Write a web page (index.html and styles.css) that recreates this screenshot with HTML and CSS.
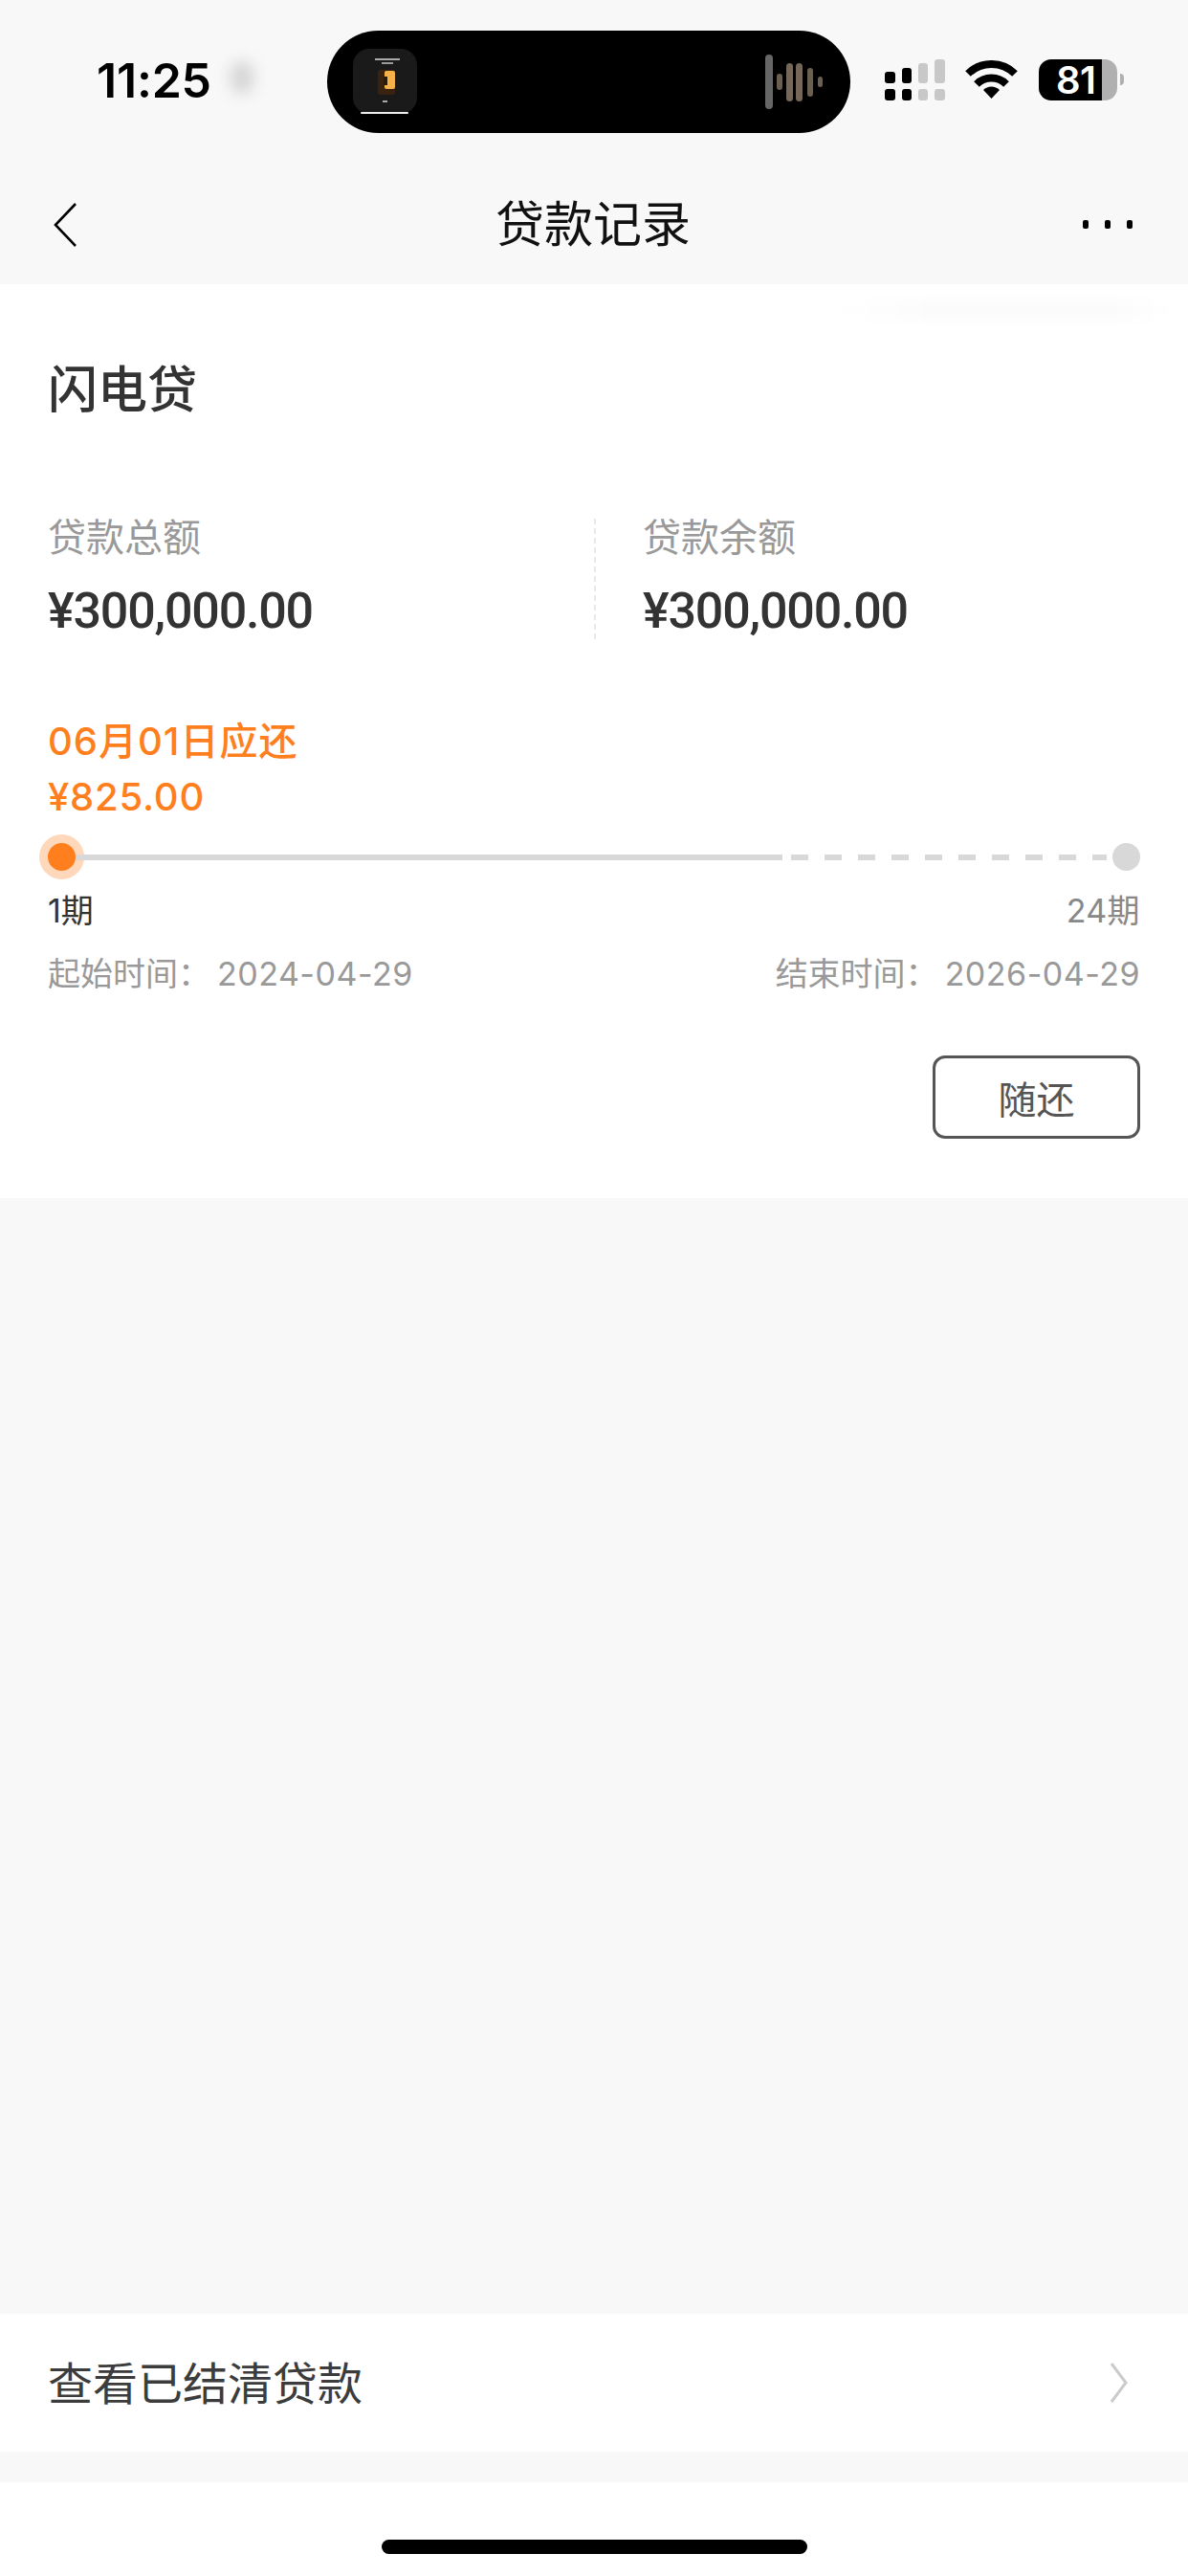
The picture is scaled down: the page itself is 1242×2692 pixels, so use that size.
FILE: index.html
```html
<!DOCTYPE html>
<html>
<head>
    <title>贷款记录</title>
    <link rel="stylesheet" href="styles.css">
</head>
<body>
    <div class="status">
        <div class="time">11:25</div>
        <div class="blur-dot"></div>
        <div class="island">
            <svg class="art" width="67" height="68" viewBox="0 0 67 68">
                <rect width="67" height="68" rx="17" fill="#1a1a1a"/>
                <rect x="23" y="10" width="26" height="2" fill="#aaa"/>
                <rect x="30" y="14" width="12" height="2" fill="#999"/>
                <rect x="26" y="22" width="18" height="26" rx="3" fill="#3a2210"/>
                <rect x="33" y="23" width="11" height="19" rx="2" fill="#f6b04a"/>
                <rect x="32" y="29" width="4" height="9" fill="#2a1a0a"/>
                <rect x="31" y="54" width="5" height="2" fill="#aaa"/>
                <rect x="8" y="66" width="50" height="2" rx="1" fill="#eee"/>
            </svg>
            <svg class="wave" width="60" height="57" viewBox="0 0 60 57">
                <rect x="0" y="0" width="8" height="57" rx="4" fill="#666"/>
                <rect x="12" y="20" width="6" height="17" rx="3" fill="#6b5f50"/>
                <rect x="22" y="9" width="7" height="40" rx="3.5" fill="#75675a"/>
                <rect x="32" y="9" width="7" height="40" rx="3.5" fill="#75675a"/>
                <rect x="44" y="14" width="6" height="30" rx="3" fill="#6b5f50"/>
                <rect x="55" y="23" width="5" height="11" rx="2.5" fill="#6b5f50"/>
            </svg>
        </div>
        <svg class="signal" width="63" height="43" viewBox="0 0 63 43">
            <rect x="0" y="13" width="11" height="12" rx="3"/>
            <rect x="0" y="31" width="11" height="12" rx="3"/>
            <rect x="18" y="9" width="10" height="16" rx="3"/>
            <rect x="18" y="31" width="10" height="12" rx="3"/>
            <rect x="35" y="4" width="10" height="21" rx="3" fill="#c8c8c8"/>
            <rect x="35" y="31" width="10" height="12" rx="3" fill="#c8c8c8"/>
            <rect x="52" y="0" width="11" height="25" rx="3" fill="#c8c8c8"/>
            <rect x="52" y="31" width="11" height="12" rx="3" fill="#c8c8c8"/>
        </svg>
        <svg class="wifi" width="55" height="40" viewBox="0 0 55 40">
            <path d="M3 14A35 35 0 0 1 52 14" fill="none" stroke="#000" stroke-width="8"/>
            <path d="M12 25A22 22 0 0 1 43 25" fill="none" stroke="#000" stroke-width="8"/>
            <path d="M27.5 40L19 31A12 12 0 0 1 36 31Z"/>
        </svg>
        <div class="battery">81</div>
        <div class="battery-nub"></div>
    </div>

    <div class="nav">
        <svg class="back" width="24" height="46" viewBox="0 0 24 46">
            <path d="M23 1L2 23L23 45" fill="none" stroke="#000" stroke-width="2.6"/>
        </svg>
        <div class="nav-title">贷款记录</div>
        <div class="more"><i></i><i></i><i></i></div>
    </div>

    <div class="card">
        <div class="card-shade"></div>
        <div class="product">闪电贷</div>
        <div class="stats">
            <div class="stat">
                <div class="stat-label">贷款总额</div>
                <div class="stat-value">¥300,000.00</div>
            </div>
            <div class="stat stat-right">
                <div class="stat-label">贷款余额</div>
                <div class="stat-value">¥300,000.00</div>
            </div>
        </div>
        <div class="due-date">06月01日应还</div>
        <div class="due-amount">¥825.00</div>
        <div class="track">
            <div class="dot dot-on"></div>
            <div class="line"></div>
            <div class="line-dashed"></div>
            <div class="dot"></div>
        </div>
        <div class="periods">
            <span class="period-now">1期</span>
            <span class="period-end">24期</span>
        </div>
        <div class="dates">
            <span><span class="date-label">起始时间：</span><span class="date">2024-04-29</span></span>
            <span><span class="date-label">结束时间：</span><span class="date">2026-04-29</span></span>
        </div>
        <div class="actions">
            <button class="repay">随还</button>
        </div>
    </div>

    <div class="main"></div>

    <div class="settled">
        <span class="settled-text">查看已结清贷款</span>
        <svg width="18" height="42" viewBox="0 0 18 42">
            <path d="M1 1L16 21L1 41" fill="none" stroke="#cbcbcb" stroke-width="3"/>
        </svg>
    </div>

    <div class="gap"></div>

    <div class="bottom">
        <div class="home-bar"></div>
    </div>
</body>
</html>
```
FILE: styles.css
```css
* {
    box-sizing: border-box;
}

body {
    margin: 0;
    width: 1242px;
    height: 2692px;
    display: flex;
    flex-direction: column;
    background: #f8f8f8;
    font-family: Inter, "Noto Sans CJK SC", sans-serif;
    color: #333;
    overflow: hidden;
}

/* status bar */
.status {
    height: 172px;
    padding: 32px 0 0 101px;
    display: flex;
    align-items: flex-start;
    flex-shrink: 0;
}

.time {
    width: 119px;
    margin-top: 30px;
    font-size: 50px;
    line-height: 44px;
    font-weight: 600;
    letter-spacing: -0.2px;
    white-space: nowrap;
    color: #000;
}

.blur-dot {
    width: 24px;
    height: 34px;
    margin: 32px 0 0 21px;
    border-radius: 50%;
    background: #d2d2d2;
    filter: blur(8px);
}

.island {
    width: 547px;
    height: 107px;
    margin-left: 77px;
    padding: 19px 29px 0 27px;
    display: flex;
    justify-content: space-between;
    align-items: flex-start;
    background: #000;
    border-radius: 54px;
}

.wave {
    margin-top: 6px;
}

.signal {
    margin: 30px 0 0 36px;
}

.wifi {
    margin: 31px 0 0 21px;
}

.battery {
    width: 82px;
    height: 43px;
    margin: 30px 0 0 22px;
    padding-left: 18px;
    border-radius: 13px;
    background: linear-gradient(90deg, #000 66px, #b0b0b0 66px);
    color: #fff;
    font-size: 40px;
    line-height: 43px;
    font-weight: 600;
    letter-spacing: -0.5px;
    white-space: nowrap;
}

.battery-nub {
    width: 4px;
    height: 12px;
    margin: 45px 0 0 3px;
    border-radius: 0 4px 4px 0;
    background: #b0b0b0;
}

/* nav */
.nav {
    height: 125px;
    padding: 0 58px 0 56px;
    display: grid;
    grid-template-columns: 1fr auto 1fr;
    align-items: center;
    flex-shrink: 0;
}

.nav-title {
    font-size: 51px;
    line-height: 60px;
    color: #111;
}

.more {
    display: flex;
    justify-content: flex-end;
    gap: 17px;
}

.more i {
    width: 6px;
    height: 9px;
    border-radius: 2px;
    background: #000;
}

/* loan card */
.card {
    position: relative;
    height: 955px;
    padding: 81px 50px 0;
    background: #fff;
    flex-shrink: 0;
}

.card-shade {
    position: absolute;
    top: 16px;
    left: 870px;
    width: 360px;
    height: 22px;
    background: linear-gradient(90deg, #fff, #fbfbfb 30%, #fbfbfb 80%, #fff);
    filter: blur(5px);
}

.product {
    font-size: 52px;
    line-height: 60px;
    font-weight: 500;
    color: #333;
}

.stats {
    display: flex;
    height: 126px;
    margin-top: 104px;
}

.stat {
    width: 571px;
}

.stat-right {
    width: auto;
    padding-left: 49px;
    border-left: 2px dashed #e8e8e8;
}

.stat-label {
    font-size: 40px;
    line-height: 40px;
    color: #999;
}

.stat-value {
    margin-top: 32px;
    font-family: Roboto, sans-serif;
    font-size: 52px;
    line-height: 50px;
    font-weight: 500;
    letter-spacing: -1.2px;
    color: #333;
}

.due-date {
    margin-top: 85px;
    font-size: 40px;
    line-height: 44px;
    font-weight: 500;
    letter-spacing: 1px;
    color: #ff7f1e;
}

.due-amount {
    margin-top: 14px;
    font-size: 40px;
    line-height: 44px;
    font-weight: 500;
    letter-spacing: 0.8px;
    color: #ff7f1e;
}

/* progress */
.track {
    display: flex;
    align-items: center;
    height: 29px;
    margin-top: 26px;
}

.dot {
    width: 29px;
    height: 29px;
    border-radius: 50%;
    background: #d8d8d8;
    flex-shrink: 0;
}

.dot-on {
    background: #ff7f1e;
    box-shadow: 0 0 0 9px rgba(255, 127, 30, 0.3);
}

.line {
    width: 739px;
    height: 6px;
    background: #d8d8d8;
}

.line-dashed {
    flex: 1;
    height: 6px;
    margin: 0 6px 0 9px;
    background: repeating-linear-gradient(90deg, #d8d8d8 0, #d8d8d8 18px, transparent 18px, transparent 35px);
}

.periods {
    display: flex;
    justify-content: space-between;
    margin-top: 22px;
    font-size: 34px;
    line-height: 40px;
}

.period-end {
    color: #888;
    letter-spacing: 0.4px;
}

.dates {
    display: flex;
    justify-content: space-between;
    margin-top: 26px;
    font-size: 34px;
    line-height: 40px;
    color: #999;
}

.date {
    margin-left: 7px;
    letter-spacing: 0.5px;
}

.actions {
    display: flex;
    justify-content: flex-end;
    margin-top: 65px;
}

.repay {
    width: 217px;
    height: 87px;
    padding: 0;
    border: 3px solid #555;
    border-radius: 13px;
    background: #fff;
    font-family: inherit;
    font-size: 40px;
    color: #555;
}

.main {
    flex: 1;
}

/* bottom row */
.settled {
    height: 144px;
    padding: 0 63px 0 50px;
    display: flex;
    justify-content: space-between;
    align-items: center;
    background: #fff;
    font-size: 47px;
    color: #3c3c3c;
    flex-shrink: 0;
}

.settled-text {
    margin-bottom: 6px;
}

.gap {
    height: 32px;
    flex-shrink: 0;
}

.bottom {
    height: 98px;
    padding-top: 60px;
    background: #fff;
    flex-shrink: 0;
}

.home-bar {
    width: 445px;
    height: 15px;
    margin: 0 auto;
    border-radius: 8px;
    background: #000;
}
```
